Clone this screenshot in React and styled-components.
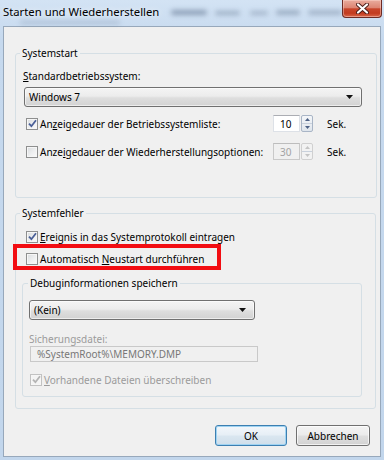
import styled, { createGlobalStyle } from "styled-components";

const GlobalStyle = createGlobalStyle`
  html, body {
    margin: 0;
    padding: 0;
    background: #c4d8ee;
  }
  body {
    font-family: "Noto Sans", "Open Sans", sans-serif;
    font-size: 10px;
    color: #000;
  }
  * {
    box-sizing: border-box;
  }
`;

const Window = styled.div`
  width: 384px;
  height: 460px;
  display: flex;
  flex-direction: column;
  background: linear-gradient(to bottom, #d3e3f4 0px, #c6d9ee 40px, #c2d6ec 100%);
  overflow: hidden;
`;

const TitleBar = styled.div`
  height: 26px;
  display: flex;
  align-items: flex-start;
`;

const TitleBlock = styled.div`
  display: flex;
  flex-direction: column;
  flex: 1;
  min-width: 0;
`;

const TitleRow = styled.div`
  display: flex;
  align-items: center;
  height: 20px;
  padding: 3px 0 0 3px;
`;

const TitleText = styled.span`
  font-size: 11.3px;
  line-height: 16px;
  color: #000;
  text-shadow: 0 0 6px rgba(255, 255, 255, 0.9);
  white-space: nowrap;
`;

/* window behind the glass frame, seen as blurred smudges */
const GlassSmudge = styled.div`
  margin: ${(p) => p.$margin};
  width: ${(p) => p.$width}px;
  height: ${(p) => p.$height}px;
  border-radius: 3px;
  background: rgba(60, 80, 110, ${(p) => p.$alpha});
  filter: blur(2.5px);
`;

const CloseButton = styled.div`
  width: 40px;
  height: 18px;
  margin-right: 2px;
  display: flex;
  align-items: center;
  justify-content: center;
  border: 1px solid #6e2b24;
  border-top: none;
  border-radius: 0 0 4px 4px;
  background: linear-gradient(
    to bottom,
    #e9ac9e 0%,
    #dd8573 45%,
    #c8452b 52%,
    #c33b1f 78%,
    #d9674b 100%
  );
  box-shadow: inset 0 0 0 1px rgba(255, 220, 210, 0.45);
`;

const Client = styled.div`
  height: 431px;
  margin: 0 3px;
  border: 1px solid #97a8bb;
  background: #f0f0f0;
`;

const GroupBox = styled.fieldset`
  margin: ${(p) => p.$margin};
  padding: ${(p) => p.$padding};
  width: ${(p) => (p.$width ? `${p.$width}px` : "auto")};
  min-width: 0;
  border: 1px solid #d5dfe5;
  border-radius: 3px;
`;

const GroupLegend = styled.legend`
  margin-left: ${(p) => p.$shift}px;
  padding: 0 2px;
  line-height: 14px;
  color: #000;
`;

const FieldLabel = styled.div`
  margin-top: ${(p) => p.$top}px;
  line-height: 14px;
  color: ${(p) => (p.$disabled ? "#9b9b9b" : "#000")};
`;

const ComboBox = styled.div`
  margin: ${(p) => p.$top}px 0 0 ${(p) => p.$left}px;
  width: ${(p) => p.$width}px;
  height: 20px;
  display: flex;
  align-items: center;
  justify-content: space-between;
  padding: 0 8px 0 4px;
  border: 1px solid #707070;
  border-radius: 3px;
  background: linear-gradient(to bottom, #f4f4f4 0%, #ececec 45%, #dedede 55%, #d2d2d2 100%);
  box-shadow: inset 0 0 0 1px rgba(255, 255, 255, 0.6);
`;

const ComboText = styled.span`
  line-height: 14px;
`;

const OptionRow = styled.div`
  margin: ${(p) => p.$top || 0}px 0 0 ${(p) => p.$left || 0}px;
  display: flex;
  align-items: center;
  min-height: 15px;
`;

const Check = styled.span`
  width: 12px;
  height: 12px;
  flex: none;
  display: flex;
  align-items: center;
  justify-content: center;
  border: 1px solid ${(p) => (p.$disabled ? "#c2c2c2" : "#8e8f8f")};
  background: ${(p) =>
    p.$disabled
      ? "#f4f4f4"
      : "linear-gradient(135deg, #d8dbde 0%, #eeeff0 55%, #fbfbfb 100%)"};
  box-shadow: inset 0 0 0 1px #f6f6f6;
`;

const CheckText = styled.span`
  margin-left: 2px;
  width: ${(p) => (p.$width ? `${p.$width}px` : "auto")};
  line-height: 14px;
  white-space: nowrap;
  color: ${(p) => (p.$disabled ? "#9b9b9b" : "#000")};
`;

const Key = styled.u`
  text-underline-offset: 1px;
`;

const Spinner = styled.div`
  display: flex;
  height: 17px;
`;

const SpinField = styled.div`
  width: 27px;
  height: 17px;
  padding-left: 6px;
  display: flex;
  align-items: center;
  line-height: 14px;
  background: ${(p) => (p.$disabled ? "#f0f0f0" : "#fff")};
  color: ${(p) => (p.$disabled ? "#a3a3a3" : "#000")};
  border: 1px solid ${(p) => (p.$disabled ? "#c9c9c9" : "#dde1e7")};
  border-top-color: ${(p) => (p.$disabled ? "#bdbdbd" : "#abadb3")};
`;

const SpinButtons = styled.div`
  width: 12px;
  height: 17px;
  margin-left: 1px;
  display: flex;
  flex-direction: column;
  border: 1px solid ${(p) => (p.$disabled ? "#d0d0d0" : "#a9b5c6")};
  border-radius: 2px;
  background: ${(p) =>
    p.$disabled ? "#f2f2f2" : "linear-gradient(to bottom, #f4f6f9, #dfe5ec)"};
`;

const SpinHalf = styled.div`
  flex: 1;
  display: flex;
  align-items: center;
  justify-content: center;
  border-top: ${(p) => (p.$lower ? "1px solid #c9d1dc" : "none")};
`;

const Unit = styled.span`
  margin-left: 14px;
  line-height: 14px;
`;

const Highlight = styled.div`
  margin-left: -10px;
  width: 208px;
  padding: 3px 0 0 9px;
  border: 4px solid #f20d12;
`;

const PathField = styled.div`
  margin-left: 1px;
  width: 228px;
  height: 16px;
  padding-left: 6px;
  display: flex;
  align-items: center;
  line-height: 14px;
  color: #777;
  background: #f0f0f0;
  border: 1px solid #c9c9c9;
`;

const ButtonBar = styled.div`
  margin-top: 16px;
  padding-right: 10px;
  display: flex;
  justify-content: flex-end;
  gap: 9px;
`;

const DialogButton = styled.div`
  width: ${(p) => p.$width}px;
  height: 21px;
  display: flex;
  align-items: center;
  justify-content: center;
  line-height: 14px;
  border-radius: 3px;
  border: 1px solid ${(p) => (p.$default ? "#3c7fb1" : "#707070")};
  background: ${(p) =>
    p.$default
      ? "linear-gradient(to bottom, #f3f7fb 0%, #e7eff6 45%, #d9e6f0 55%, #cfdeea 100%)"
      : "linear-gradient(to bottom, #f4f4f4 0%, #ececec 45%, #dedede 55%, #d2d2d2 100%)"};
  box-shadow: inset 0 0 0 1px ${(p) => (p.$default ? "#9fd3f2" : "rgba(255,255,255,0.7)")};
`;

const CheckMark = ({ color }) => (
  <svg width="9" height="9" viewBox="0 0 9 9">
    <path d="M1 4.6 L3.4 7.2 L8 1.2" fill="none" stroke={color} strokeWidth="1.8" />
  </svg>
);

const Box = ({ checked, disabled }) => (
  <Check $disabled={disabled}>
    {checked && <CheckMark color={disabled ? "#b4b4b4" : "#4a5f97"} />}
  </Check>
);

const Arrow = ({ up, color }) => (
  <svg width="5" height="3" viewBox="0 0 5 3">
    <polygon points={up ? "0,3 5,3 2.5,0" : "0,0 5,0 2.5,3"} fill={color} />
  </svg>
);

const NumberSpin = ({ value, disabled }) => {
  const c = disabled ? "#c4c4c4" : "#4d6185";
  return (
    <Spinner>
      <SpinField $disabled={disabled}>{value}</SpinField>
      <SpinButtons $disabled={disabled}>
        <SpinHalf>
          <Arrow up color={c} />
        </SpinHalf>
        <SpinHalf $lower>
          <Arrow color={c} />
        </SpinHalf>
      </SpinButtons>
    </Spinner>
  );
};

const DropArrow = () => (
  <svg width="7" height="4" viewBox="0 0 7 4">
    <polygon points="0,0 7,0 3.5,4" fill="#111" />
  </svg>
);

const CloseGlyph = () => (
  <svg width="13" height="11" viewBox="0 0 13 11">
    <path d="M2 1.5 L11 9.5 M11 1.5 L2 9.5" stroke="#4a1c18" strokeWidth="4" strokeLinecap="round" />
    <path d="M2 1.5 L11 9.5 M11 1.5 L2 9.5" stroke="#fff" strokeWidth="2.2" strokeLinecap="round" />
  </svg>
);

const App = () => {
  return (
    <>
      <GlobalStyle />
      <Window>
        <TitleBar>
          <TitleBlock>
            <TitleRow>
              <TitleText>Starten und Wiederherstellen</TitleText>
              <GlassSmudge $margin="2px 0 0 12px" $width={40} $height={5} $alpha={0.45} />
              <GlassSmudge $margin="2px 0 0 8px" $width={28} $height={4} $alpha={0.35} />
              <GlassSmudge $margin="2px 0 0 10px" $width={20} $height={4} $alpha={0.3} />
              <GlassSmudge $margin="2px 0 0 8px" $width={26} $height={5} $alpha={0.35} />
              <GlassSmudge $margin="2px 0 0 8px" $width={38} $height={5} $alpha={0.3} />
            </TitleRow>
            <GlassSmudge $margin="1px 0 0 20px" $width={100} $height={3} $alpha={0.25} />
          </TitleBlock>
          <CloseButton>
            <CloseGlyph />
          </CloseButton>
        </TitleBar>

        <Client>
          <GroupBox $margin="19px 3px 0 11px" $padding="0 0 37px 7px">
            <GroupLegend $shift={-3}>Systemstart</GroupLegend>
            <FieldLabel $top={9}>
              <Key>S</Key>tandardbetriebssystem:
            </FieldLabel>
            <ComboBox $top={4} $left={1} $width={338}>
              <ComboText>Windows 7</ComboText>
              <DropArrow />
            </ComboBox>
            <OptionRow $top={8} $left={3}>
              <Box checked />
              <CheckText $width={233}>
                An<Key>z</Key>eigedauer der Betriebssystemliste:
              </CheckText>
              <NumberSpin value="10" />
              <Unit>Sek.</Unit>
            </OptionRow>
            <OptionRow $top={11} $left={3}>
              <Box />
              <CheckText $width={233}>
                Anze<Key>i</Key>gedauer der Wiederherstellungsoptionen:
              </CheckText>
              <NumberSpin value="30" disabled />
              <Unit>Sek.</Unit>
            </OptionRow>
          </GroupBox>

          <GroupBox $margin="8px 4px 0 11px" $padding="0 0 11px 7px">
            <GroupLegend $shift={-3}>Systemfehler</GroupLegend>
            <OptionRow $top={9} $left={3}>
              <Box checked />
              <CheckText>
                <Key>E</Key>reignis in das Systemprotokoll eintragen
              </CheckText>
            </OptionRow>
            <Highlight>
              <OptionRow>
                <Box />
                <CheckText>
                  Automatisch <Key>N</Key>eustart durchführen
                </CheckText>
              </OptionRow>
            </Highlight>

            <GroupBox $margin="6px 0 0 -1px" $padding="0 0 9px 6px" $width={340}>
              <GroupLegend $shift={-1}>Debuginformationen speichern</GroupLegend>
              <ComboBox $top={10} $left={0} $width={226}>
                <ComboText>(Kein)</ComboText>
                <DropArrow />
              </ComboBox>
              <FieldLabel $top={12} $disabled>
                Sicherungsdatei:
              </FieldLabel>
              <PathField>%SystemRoot%\MEMORY.DMP</PathField>
              <OptionRow $top={10} $left={1}>
                <Box checked disabled />
                <CheckText $disabled>
                  <Key>V</Key>orhandene Dateien überschreiben
                </CheckText>
              </OptionRow>
            </GroupBox>
          </GroupBox>

          <ButtonBar>
            <DialogButton $width={72} $default>
              OK
            </DialogButton>
            <DialogButton $width={74}>Abbrechen</DialogButton>
          </ButtonBar>
        </Client>
      </Window>
    </>
  );
};

export default App;
